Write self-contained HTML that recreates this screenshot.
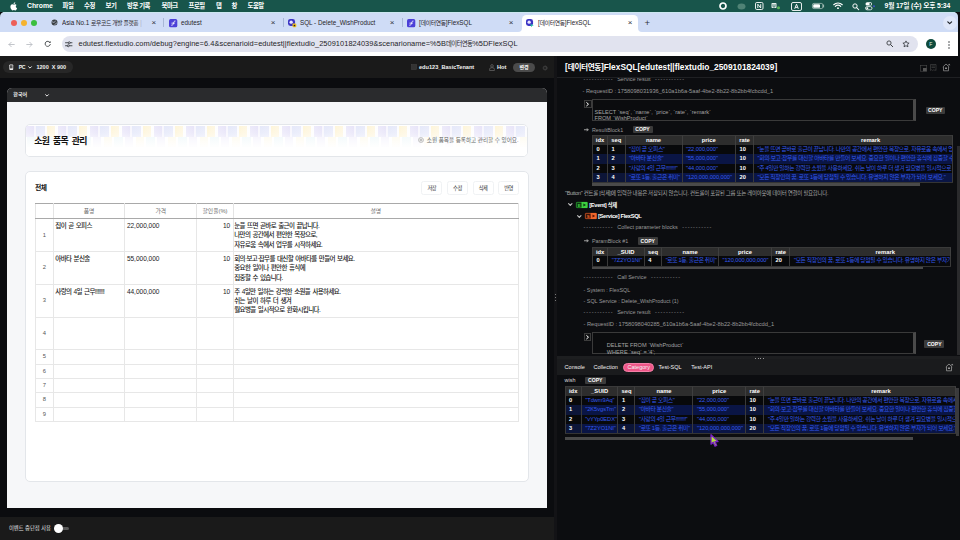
<!DOCTYPE html>
<html lang="ko">
<head>
<meta charset="utf-8">
<title>[데이터연동]FlexSQL</title>
<style>
*{box-sizing:border-box;margin:0;padding:0}
html,body{width:960px;height:540px;overflow:hidden;background:#0c0d10}
body{position:relative;font-family:"Liberation Sans","Noto Sans CJK KR",sans-serif;color:#fff;-webkit-font-smoothing:antialiased}
.a{position:absolute;white-space:nowrap}
svg{position:absolute;overflow:visible}
/* mac menubar */
#menubar{left:0;top:0;width:960px;height:12.4px;background:#18554b}
#menubar .m{top:0;height:12px;line-height:12px;font-size:6.4px;letter-spacing:-.45px;font-weight:700;color:#fff}
/* chrome */
#tabstrip{left:0;top:12.3px;width:958px;height:20px;background:#cfdcf6;border-radius:5px 5px 0 0;box-shadow:inset 0 .8px 0 #cdeaf0}
#toolbar{left:0;top:32px;width:958px;height:24px;background:#fff}
.tabt{top:16px;height:13px;line-height:13px;font-size:6.3px;color:#1f2328}
.tabx{top:15.5px;height:13px;line-height:13px;font-size:8px;color:#30343a}
.sep{top:18px;width:1px;height:9px;background:#a8b8d6}
#omni{left:62px;top:36px;width:856px;height:16px;border-radius:8px;background:#e1e3ef}
#url{left:78.5px;top:36px;height:16px;line-height:16px;font-size:7.42px;letter-spacing:.06px;color:#1f2328}
.k{letter-spacing:-.3px;font-size:5.75px}
/* left */
#ltop{left:0;top:56px;width:554px;height:22px;background:#1a1a1a}
#lbot{left:0;top:517px;width:554px;height:23px;background:#1a1a1a}
#lmid{left:0;top:78px;width:554px;height:439px;background:#0b0c0f}
#frame{left:7px;top:88px;width:540px;height:420px;background:#f6f7f9;border-radius:5px 5px 0 0;overflow:hidden}
#lang{left:0;top:0;width:540px;height:14px;background:#2a2b2d}
.card{background:#fff;border:1px solid #e3e6ea;border-radius:5px}

.lt{font-size:5.7px;font-weight:700;color:#f2f2f2;height:22px;line-height:22px;top:56px}
#frame .t{color:#222}
.btn{top:92.7px;width:21px;height:14.3px;border:1px solid #f0f2f4;border-radius:2.5px;background:#fff;font-size:5.3px;letter-spacing:-.5px;line-height:12.3px;text-align:center;color:#333}
#tbl{left:28px;top:115px;width:484px;border-collapse:collapse;table-layout:fixed;font-size:6.7px;color:#1c1c1c}
#tbl th{height:15.4px;font-weight:400;color:#6c6c6c;font-size:5.8px;border-left:1px solid #e4e4e4;border-right:1px solid #e4e4e4;border-top:1px solid #a9a9a9;border-bottom:1.3px solid #a9a9a9;background:#fff;padding:0;line-height:13px}
#tbl td{font-weight:500;border:1px solid #e7e7e7;vertical-align:top;padding:1.7px 2.4px 0 1.6px;line-height:9.35px;height:32.75px;white-space:nowrap;overflow:hidden}
#tbl tr.s td{height:14.35px}
#tbl td.i{font-weight:400;text-align:center;vertical-align:middle;color:#555;font-size:5.8px;padding:0}
#tbl td.r{text-align:right}
#tbl td:last-child{padding-left:.6px}
#tbl td.ko{letter-spacing:-.62px;word-spacing:1px;font-size:6.5px}
#tbl td.nu{font-size:6.55px;letter-spacing:-.02px}
#pat1{background:repeating-linear-gradient(90deg,#e4e0f8 0,#dcd7f5 8px,#f3f1fc 8px,#f3f1fc 10.5px,#d9def7 10.5px,#dfe2f8 19px,#fbfbfe 19px,#fbfbfe 21.5px,#fdf0c8 21.5px,#fdf3d6 29px,#fdfdfe 29px,#fdfdfe 32px)}
#pat2{background:repeating-linear-gradient(90deg,#fdf6de 0,#fdf6de 8px,#fff 8px,#fff 10.5px,#e3f3f6 10.5px,#e3f3f6 19px,#fff 19px,#fff 21.5px,#ebe8fa 21.5px,#ebe8fa 29px,#fff 29px,#fff 32px);background-position:14px 0}

/* right */
.g{font-size:5.4px;color:#9a9a9a;height:8px;line-height:8px}
.w{font-size:5.8px;letter-spacing:-.36px;color:#fff;font-weight:700;height:8px;line-height:8px}
.copy{background:#3b3b3b;color:#fff;font-size:5.1px;font-weight:700;text-align:center;border-radius:1px}
.exp{width:7.4px;height:8.2px;border:.7px solid #3c3c3c;background:#111214}
.code{border:1px solid #3a3a3a;border-right:3px solid #4a4a4a;background:#0b0c0e}
.dt{border-collapse:separate;border-spacing:0;table-layout:fixed;font-size:5.7px;background:#3a3a3a;border-left:1px solid #3a3a3a;border-bottom:1px solid #343434}
.dt th{background:#2d2d2d;color:#fff;font-weight:700;text-align:center;height:9.8px;line-height:8.8px;padding:0;border-right:1px solid #3f3f3f;border-top:1px solid #3a3a3a;font-size:5.8px}
.dt td{height:9.2px;line-height:9.2px;padding:0 0 0 3.5px;color:#3359ee;background:#08090b;border-right:1px solid #3a3a3a;white-space:nowrap;overflow:hidden;letter-spacing:-.05px}
.dt td.k{letter-spacing:-.35px}
.dt td.n{color:#fff;font-weight:700;letter-spacing:0}
.dt tr.o td{background:#0a1545}
.dt tr.o td.n{background:#0c1538}
.sb{height:2.6px;background:#4a4a4a}
.tb{top:362.6px;height:9.5px;line-height:9.5px;font-size:5.5px;letter-spacing:.02px;color:#f2f2f2}
.ds{letter-spacing:.93px}
.dx{margin:0 4.5px 0 3.7px;font-size:5.5px}
</style>
</head>
<body>
<!-- MENUBAR -->
<div id="menubar" class="a">
  <svg style="left:10px;top:1.5px" width="7" height="8.5" viewBox="0 0 14 17"><path fill="#fff" d="M11.6 9c0-2 1.7-3 1.7-3-1-1.4-2.4-1.6-2.9-1.6-1.2-.1-2.4.7-3 .7s-1.6-.7-2.6-.7C3.5 4.4 2.2 5.2 1.5 6.4 0 8.9 1.1 12.7 2.5 14.7c.7 1 1.5 2.1 2.6 2.1 1 0 1.4-.7 2.7-.7s1.6.7 2.7.7 1.8-1 2.5-2c.8-1.2 1.1-2.3 1.1-2.4 0 0-2.5-.9-2.5-3.4zM9.6 3c.6-.7 1-1.7.9-2.7-.8 0-1.8.5-2.4 1.2-.5.6-1 1.6-.9 2.6.9.1 1.8-.4 2.4-1.1z"/></svg>
  <div class="a m" style="left:27px;font-size:6.9px;letter-spacing:-.05px">Chrome</div>
  <div class="a m" style="left:62.5px">파일</div>
  <div class="a m" style="left:84px">수정</div>
  <div class="a m" style="left:105.5px">보기</div>
  <div class="a m" style="left:127px">방문 기록</div>
  <div class="a m" style="left:161.5px">북마크</div>
  <div class="a m" style="left:188.5px">프로필</div>
  <div class="a m" style="left:216px">탭</div>
  <div class="a m" style="left:231.5px">창</div>
  <div class="a m" style="left:247.5px">도움말</div>

  <svg style="left:718.5px;top:2px" width="8" height="8" viewBox="0 0 8 8"><circle cx="4" cy="4" r="3" fill="none" stroke="#fff" stroke-width="1.7"/></svg>
  <svg style="left:737px;top:2.5px" width="9" height="7" viewBox="0 0 9 7"><ellipse cx="4.5" cy="3.5" rx="4" ry="3" fill="#4f8275"/></svg>
  <svg style="left:755px;top:2px" width="8.5" height="8" viewBox="0 0 8.5 8"><rect x=".5" y=".5" width="7.5" height="7" rx="1.3" fill="none" stroke="#fff" stroke-width=".9"/><path d="M2.8 6V2.2L5.7 6V2.2" fill="none" stroke="#fff" stroke-width=".9"/></svg>
  <svg style="left:771px;top:2px" width="10" height="8" viewBox="0 0 10 8"><rect x=".5" y="1" width="5" height="5" rx=".8" fill="#e8efec"/><path d="M2 2.2v2a1 1 0 0 0 2 0v-2" stroke="#18554b" stroke-width=".8" fill="none"/><circle cx="7.5" cy="5.8" r="1.5" fill="#59b558"/></svg>
  <svg style="left:791px;top:1.5px" width="11" height="9" viewBox="0 0 11 9"><rect x=".5" y=".5" width="10" height="8" rx="1.5" fill="none" stroke="#fff" stroke-width=".9"/><path d="M3.7 6.8L5.5 2.2 7.3 6.8M4.3 5.4h2.4" fill="none" stroke="#fff" stroke-width=".9"/></svg>
  <svg style="left:811.5px;top:3px" width="13" height="6" viewBox="0 0 13 6"><rect x=".4" y=".4" width="10.4" height="5.2" rx="1.5" fill="none" stroke="#a9c2bb" stroke-width=".8"/><rect x="1.2" y="1.2" width="6.8" height="3.6" rx=".9" fill="#fff"/><path d="M11.6 2v2" stroke="#a9c2bb" stroke-width="1" stroke-linecap="round"/></svg>
  <svg style="left:832.5px;top:2.2px" width="10" height="7.5" viewBox="0 0 20 15"><path d="M1.5 5.5a12 12 0 0 1 17 0M4.6 8.6a7.6 7.6 0 0 1 10.8 0" fill="none" stroke="#fff" stroke-width="2.3" stroke-linecap="round"/><circle cx="10" cy="12.3" r="1.9" fill="#fff"/></svg>
  <svg style="left:851.5px;top:2.5px" width="7.5" height="7.5" viewBox="0 0 15 15"><circle cx="6" cy="6" r="4.3" fill="none" stroke="#fff" stroke-width="1.9"/><path d="M9.3 9.3L13.5 13.5" stroke="#fff" stroke-width="2.1" stroke-linecap="round"/></svg>
  <svg style="left:865px;top:2px" width="10" height="8.5" viewBox="0 0 10 8.5"><rect x=".5" y=".3" width="6.5" height="3.2" rx="1.6" fill="#fff"/><circle cx="5.3" cy="1.9" r="1" fill="#18554b"/><rect x=".5" y="4.6" width="6.5" height="3.2" rx="1.6" fill="none" stroke="#fff" stroke-width=".8"/><circle cx="2.3" cy="6.2" r="1" fill="#fff"/><circle cx="9" cy="4.3" r="1" fill="#3f51c9"/></svg>
  <div class="a m" style="left:884.5px;font-size:6.8px;letter-spacing:-.15px">9월 17일 (수) 오후 5:34</div>
</div>
<!-- TABSTRIP -->
<div id="tabstrip" class="a"></div>
<div id="toolbar" class="a"></div>
<div id="omni" class="a"></div>
<div id="url" class="a">edutest.flextudio.com/debug?engine=6.4&amp;scenarioid=edutest||flextudio_2509101824039&amp;scenarioname=%5B<span style="font-size:6.3px;letter-spacing:-.55px">데이터연동</span>%5DFlexSQL</div>

<!-- tabs -->
<svg style="left:10.5px;top:19.5px" width="26" height="6" viewBox="0 0 26 6"><circle cx="3" cy="3" r="3" fill="#ed5f57"/><circle cx="13" cy="3" r="3" fill="#f5b32f"/><circle cx="23" cy="3" r="3" fill="#3bbf3e"/></svg>
<svg style="left:50.5px;top:19px" width="7" height="7" viewBox="0 0 14 14"><circle cx="7" cy="7" r="6" fill="#3c4043"/><path d="M2 5.5c2 0 2.5 1.5 4 1.5s1-2.5 3-3M8 13c-1-2 1-2.5 1.5-4s2.5-.5 3.5-1" stroke="#cfdcf6" stroke-width="1.3" fill="none"/></svg>
<div class="a tabt" style="left:62px;width:81.5px;overflow:hidden">Asia No.1 <span class="k">로우코드 개발 플랫폼</span> | Fle</div>
<div class="a" style="left:132px;top:15px;width:12px;height:14px;background:linear-gradient(90deg,rgba(207,220,246,0),#cfdcf6)"></div>
<div class="a tabx" style="left:151.5px">×</div>
<div class="a sep" style="left:163px"></div>
<svg class="fav" style="left:168.7px;top:18.5px" width="8.3" height="8.3" viewBox="0 0 10 10"><rect width="10" height="10" rx="2" fill="#4b3fd8"/><path d="M3.2 7.5c1.5 0 2-.8 2.3-2.5s.6-2.5 1.8-2.5M3.5 5h3" stroke="#fff" stroke-width="1" fill="none" stroke-linecap="round"/></svg>
<div class="a tabt" style="left:181px">edutest</div>
<div class="a tabx" style="left:270.7px">×</div>
<div class="a sep" style="left:282.5px"></div>
<svg class="fav" style="left:288px;top:18.5px" width="8.3" height="8.3" viewBox="0 0 10 10"><rect width="8.5" height="8.5" rx="3" fill="#3b34c4"/><circle cx="3.8" cy="3.8" r="2" fill="#e9e6ff"/><rect x="5.5" y="5.5" width="4.5" height="4.5" rx="1" fill="#f4c21f"/><rect x="6.8" y="7" width="1.9" height="1.8" fill="#222"/></svg>
<div class="a tabt" style="left:300px">SQL - Delete_WishProduct</div>
<div class="a tabx" style="left:389.7px">×</div>
<div class="a sep" style="left:401.7px"></div>
<svg class="fav" style="left:406.7px;top:18.5px" width="8.3" height="8.3" viewBox="0 0 10 10"><rect width="10" height="10" rx="2" fill="#4b3fd8"/><path d="M3.2 7.5c1.5 0 2-.8 2.3-2.5s.6-2.5 1.8-2.5M3.5 5h3" stroke="#fff" stroke-width="1" fill="none" stroke-linecap="round"/></svg>
<div class="a tabt" style="left:419px">[<span class="k">데이터연동</span>]FlexSQL</div>
<div class="a tabx" style="left:508.7px">×</div>
<!-- active tab -->
<div class="a" style="left:521.5px;top:15px;width:116px;height:17px;background:#fff;border-radius:4.5px 4.5px 0 0"></div>
<svg style="left:517.5px;top:28px" width="4" height="4" viewBox="0 0 4 4"><path d="M4 0v4H0a4 4 0 0 0 4-4z" fill="#fff"/></svg>
<svg style="left:637.5px;top:28px" width="4" height="4" viewBox="0 0 4 4"><path d="M0 0v4h4a4 4 0 0 1-4-4z" fill="#fff"/></svg>
<svg class="fav" style="left:525.8px;top:18.5px" width="8.3" height="8.3" viewBox="0 0 10 10"><rect width="8.5" height="8.5" rx="3" fill="#3b34c4"/><circle cx="3.8" cy="3.8" r="2" fill="#e9e6ff"/><path d="M5 6l4.5 1.5-2 .7-.7 1.8z" fill="#22c9a0"/></svg>
<div class="a tabt" style="left:538px">[<span class="k">데이터연동</span>]FlexSQL</div>
<div class="a tabx" style="left:627.7px">×</div>
<div class="a" style="left:644.5px;top:15.5px;height:13px;line-height:13px;font-size:9.5px;color:#30343a">+</div>
<div class="a" style="left:943px;top:15.5px;width:14px;height:14px;border-radius:7px;background:#dfe7f9"></div>
<svg style="left:947.3px;top:20.8px" width="5.4" height="3.6" viewBox="0 0 5.4 3.6"><path d="M.8.8l1.9 1.9L4.6.8" fill="none" stroke="#1f2328" stroke-width="1.2" stroke-linecap="round" stroke-linejoin="round"/></svg>
<!-- toolbar icons -->
<svg style="left:7.5px;top:40.5px" width="7" height="7" viewBox="0 0 14 14"><path d="M12.5 7H2M6.5 2.5L2 7l4.5 4.5" fill="none" stroke="#b8bcc2" stroke-width="1.7" stroke-linecap="round" stroke-linejoin="round"/></svg>
<svg style="left:25.5px;top:40.5px" width="7" height="7" viewBox="0 0 14 14"><path d="M1.5 7H12M7.5 2.5L12 7l-4.5 4.5" fill="none" stroke="#b8bcc2" stroke-width="1.7" stroke-linecap="round" stroke-linejoin="round"/></svg>
<svg style="left:43.5px;top:40.3px" width="7.4" height="7.4" viewBox="0 0 15 15"><path d="M12.3 5.2A5.3 5.3 0 1 0 12.8 9" fill="none" stroke="#3c4043" stroke-width="1.8" stroke-linecap="round"/><path d="M13.3 1.8v4h-4z" fill="#3c4043"/></svg>
<svg style="left:65px;top:41px" width="7.5" height="6.5" viewBox="0 0 15 13"><path d="M1 3.5h5M11 3.5h3M1 9.5h3M9 9.5h5" stroke="#30343a" stroke-width="1.7" stroke-linecap="round"/><circle cx="8.5" cy="3.5" r="2" fill="none" stroke="#30343a" stroke-width="1.6"/><circle cx="6.5" cy="9.5" r="2" fill="none" stroke="#30343a" stroke-width="1.6"/></svg>
<svg style="left:886px;top:40.3px" width="7.5" height="7.5" viewBox="0 0 15 15"><circle cx="6" cy="6" r="4.2" fill="none" stroke="#3c4043" stroke-width="1.8"/><path d="M9.3 9.3L13.5 13.5" stroke="#3c4043" stroke-width="2" stroke-linecap="round"/></svg>
<svg style="left:902px;top:40px" width="8" height="8" viewBox="0 0 16 16"><path d="M8 1.8l1.9 4 4.3.5-3.2 3 .9 4.3L8 11.4l-3.9 2.2.9-4.3-3.2-3 4.3-.5z" fill="none" stroke="#30343a" stroke-width="1.6" stroke-linejoin="round"/></svg>
<div class="a" style="left:925.8px;top:39px;width:10px;height:10px;border-radius:5px;background:#0e4b3d;color:#e9f5f0;font-size:5px;line-height:10px;text-align:center">F</div>
<svg style="left:948px;top:40.5px" width="2" height="8" viewBox="0 0 2 8"><circle cx="1" cy="1" r=".8" fill="#3c4043"/><circle cx="1" cy="4" r=".8" fill="#3c4043"/><circle cx="1" cy="7" r=".8" fill="#3c4043"/></svg>
<!-- LEFT -->
<div id="lmid" class="a"></div>
<div id="ltop" class="a"></div>
<div id="lbot" class="a"></div>
<div class="a" style="left:3px;top:61px;width:70px;height:12px;border-radius:6px;background:#272727"></div>
<svg style="left:9px;top:64px" width="4.6" height="6.4" viewBox="0 0 4.6 6.4"><rect x=".4" y=".4" width="3.8" height="5.6" rx=".8" fill="#f0f0f0"/><rect x="1" y="1.2" width="2.6" height="3.2" fill="#555"/></svg>
<div class="a lt" style="left:18.8px;font-size:5.2px;letter-spacing:-.4px">PC</div>
<svg style="left:28px;top:65.7px" width="4" height="3" viewBox="0 0 4 3"><path d="M.6.7L2 2.1 3.4.7" fill="none" stroke="#fff" stroke-width=".9" stroke-linecap="round" stroke-linejoin="round"/></svg>
<div class="a lt" style="left:36.5px;font-size:5.5px">1200&nbsp; X 900</div>
<svg style="left:410.5px;top:64.2px" width="6" height="6" viewBox="0 0 6 6"><rect x=".3" y=".3" width="5.4" height="5.4" fill="#2c2c2c" stroke="#444" stroke-width=".5"/><path d="M2 .3v5.4M4 .3v5.4M.3 2h5.4M.3 4h5.4" stroke="#444" stroke-width=".4"/></svg>
<div class="a lt" style="left:419px;font-size:5.6px">edu123_BasicTenant</div>
<svg style="left:489px;top:63.5px" width="6" height="7" viewBox="0 0 12 14"><circle cx="6" cy="3.8" r="2.6" fill="none" stroke="#777" stroke-width="1.2"/><path d="M1.2 13v-2.5a3 3 0 0 1 3-3h3.6a3 3 0 0 1 3 3V13z" fill="none" stroke="#777" stroke-width="1.2"/></svg>
<div class="a lt" style="left:497px;font-size:5.7px">Hot</div>
<div class="a" style="left:513px;top:63px;width:22px;height:9px;border-radius:4.5px;background:#4b4b4b;font-size:5px;font-weight:700;line-height:9px;text-align:center;color:#fff">변경</div>
<svg style="left:541.7px;top:64.5px" width="6" height="6" viewBox="0 0 12 12"><path d="M6 .8l1.5.4.5 1.4 1.4-.4 1.1 1.1-.4 1.4 1.4.5V6.8l-1.4.5.4 1.4-1.1 1.1-1.4-.4-.5 1.4H5.2l-.5-1.4-1.4.4-1.1-1.1.4-1.4L1.2 6.8V5.2l1.4-.5-.4-1.4 1.1-1.1 1.4.4.5-1.4z" fill="#3a3a3a"/><circle cx="6" cy="6" r="1.8" fill="#1a1a1a"/></svg>
<div class="a" style="left:9px;top:517px;height:23px;line-height:23px;font-size:5.3px;color:#e0e0e0">이벤트 중단점 사용</div>
<div class="a" style="left:57px;top:526.7px;width:11.5px;height:3.6px;border-radius:2px;background:#5a5a5a"></div>
<div class="a" style="left:53.5px;top:524px;width:9px;height:9px;border-radius:4.5px;background:#fff"></div>
<div id="frame" class="a">
  <div id="lang" class="a"></div>
  <div class="a" style="left:6.3px;top:0;height:14px;line-height:13.6px;font-size:5px;font-weight:700;color:#f0f0f0">한국어</div>
  <svg style="left:38.4px;top:5.6px" width="4" height="3" viewBox="0 0 4 3"><path d="M.6.7L2 2.1 3.4.7" fill="none" stroke="#fff" stroke-width=".9" stroke-linecap="round" stroke-linejoin="round"/></svg>
  <!-- title card -->
  <div class="a card" id="c1" style="left:18px;top:36px;width:503px;height:32.5px;overflow:hidden">
    <div class="a" id="pat1" style="left:0;top:1px;width:503px;height:10.5px"></div>
    <div class="a" id="pat2" style="left:0;top:12px;width:503px;height:10px"></div>
    <div class="a" style="left:0;top:0;width:503px;height:32px;background:linear-gradient(180deg,rgba(255,255,255,.3) 0,rgba(255,255,255,.45) 25%,rgba(255,255,255,.7) 45%,rgba(255,255,255,.92) 65%,rgba(255,255,255,1) 85%)"></div>
  </div>
  <div class="a t" style="left:27.2px;top:45.5px;height:14px;line-height:14px;font-size:8.9px;letter-spacing:-.55px;word-spacing:1.6px;font-weight:700;color:#111">소원 품목 관리</div>
  <div class="a t" style="right:28.5px;top:46.5px;height:11px;line-height:11px;font-size:5.6px;color:#666"><svg style="position:relative;display:inline-block;vertical-align:-1.2px;margin-right:1px" width="6" height="6" viewBox="0 0 6 6"><circle cx="3" cy="3" r="2.5" fill="#e8e8e8" stroke="#b5b5b5" stroke-width=".7"/><circle cx="3" cy="3" r="1" fill="#b5b5b5"/></svg> 소원 품목을 등록하고 관리할 수 있어요.</div>
  <!-- list card -->
  <div class="a card" style="left:18px;top:82.5px;width:503.6px;height:311.8px"></div>
  <div class="a t" style="left:28px;top:93px;height:14px;line-height:14px;font-size:6.8px;letter-spacing:-.6px;font-weight:700;color:#111">전체</div>
  <div class="a btn" style="left:414.3px">저장</div>
  <div class="a btn" style="left:439.9px">수정</div>
  <div class="a btn" style="left:465.5px">삭제</div>
  <div class="a btn" style="left:491px">반영</div>
  <table id="tbl" class="a">
    <colgroup><col style="width:17.7px"><col style="width:71.6px"><col style="width:72.2px"><col style="width:36.1px"><col></colgroup>
    <tr><th></th><th>품명</th><th>가격</th><th>할인율(%)</th><th>설명</th></tr>
    <tr><td class="i">1</td><td class="ko">집이 곧 오피스</td><td class="nu">22,000,000</td><td class="r nu">10</td><td class="ko">눈을 뜨면 곧바로 출근이 끝납니다.<br>나만의 공간에서 편안한 복장으로,<br>자유로움 속에서 업무를 시작하세요.</td></tr>
    <tr><td class="i">2</td><td class="ko">아바타 분신술</td><td class="nu">55,000,000</td><td class="r nu">10</td><td class="ko">회의·보고·잡무를 대신할 아바타를 만들어 보세요.<br>중요한 일이나 편안한 휴식에<br>집중할 수 있습니다.</td></tr>
    <tr><td class="i">3</td><td class="ko">사랑의 4일 근무!!!!!!!!</td><td class="nu">44,000,000</td><td class="r nu">10</td><td class="ko">주 4일만 일하는 강력한 소원을 사용하세요.<br>쉬는 날이 하루 더 생겨<br>월요병을 일시적으로 완화시킵니다.</td></tr>
    <tr><td class="i">4</td><td></td><td></td><td></td><td></td></tr>
    <tr class="s"><td class="i">5</td><td></td><td></td><td></td><td></td></tr>
    <tr class="s"><td class="i">6</td><td></td><td></td><td></td><td></td></tr>
    <tr class="s"><td class="i">7</td><td></td><td></td><td></td><td></td></tr>
    <tr class="s"><td class="i">8</td><td></td><td></td><td></td><td></td></tr>
    <tr class="s"><td class="i">9</td><td></td><td></td><td></td><td></td></tr>
  </table>
</div>
<!-- RIGHT -->
<div id="right" class="a" style="left:557px;top:56px;width:403px;height:484px;background:#0c0d10"></div>
<div class="a" style="left:553.5px;top:56px;width:3.5px;height:484px;background:#131316"></div>
<div class="a" style="left:554.6px;top:294px;width:1px;height:9px;background:repeating-linear-gradient(180deg,#777 0,#777 1px,transparent 1px,transparent 3px)"></div>
<div class="a g" style="left:583.5px;top:74.5px"><span class="ds">-----------</span><span class="dx">Service result</span><span class="ds">-----------</span></div>
<div class="a" style="left:557px;top:56px;width:403px;height:21.5px;background:#0c0d10;border-bottom:1px solid #1f2023"></div>
<div class="a" id="rtitle" style="left:565px;top:58px;height:18px;line-height:18px;font-size:8.35px;font-weight:700;color:#fff">[<span style="letter-spacing:-.45px;font-size:7.7px">데이터연동</span>]FlexSQL[edutest||flextudio_2509101824039]</div>
<svg style="left:920px;top:64.5px" width="7" height="6.5" viewBox="0 0 7 6.5"><rect x=".3" y=".3" width="6.4" height="5.9" fill="none" stroke="#4a4a4a" stroke-width=".6"/><rect x="3" y="3" width="3.7" height="3.2" fill="#555"/></svg>
<svg style="left:930.3px;top:64px" width="6.5" height="7" viewBox="0 0 6.5 7"><path d="M.5.5h5.5v6l-1-.8-.9.8-.9-.8-.9.8-.9-.8-.9.8z" fill="none" stroke="#4a4a4a" stroke-width=".6"/><path d="M1.5 2h3.5M1.5 3.5h3.5" stroke="#4a4a4a" stroke-width=".6"/></svg>
<svg style="left:941.5px;top:63px" width="9" height="8.5" viewBox="0 0 9 8.5"><path d="M.8 4L4 1l3.2 3M1.5 3.8V7.8h5V3.8" fill="none" stroke="#8a8a8a" stroke-width=".8"/><path d="M5.5 2.2l2-1.5.8 1.5z" fill="#8a8a8a"/><rect x="3" y="4.5" width="2" height="1.5" fill="#8a8a8a"/></svg>

<div class="a g" style="left:582.5px;top:87.3px;font-size:5.7px">- RequestID : 1758098031936_610a1b6a-5aaf-4be2-8b22-8b2bb4fcbcdd_1</div>
<div class="a code" style="left:591.5px;top:99.2px;width:324.5px;height:22.1px"></div>
<div class="a exp" style="left:584.2px;top:100px"></div>
<svg style="left:586.3px;top:102px" width="3.2" height="4.4" viewBox="0 0 3.2 4.4"><path d="M.7.6l1.8 1.6L.7 3.8" fill="none" stroke="#fff" stroke-width="1" stroke-linecap="round" stroke-linejoin="round"/></svg>
<div class="a g" style="left:594.5px;top:107.7px;color:#a5a5a5;font-size:5.6px">SELECT `seq`, `name`, `price`, `rate`, `remark`</div>
<div class="a g" style="left:594.5px;top:114px;color:#a5a5a5;font-size:5.6px">FROM `WishProduct`</div>
<div class="a copy" style="left:925.5px;top:106.5px;width:19.5px;height:7.5px;line-height:7.5px">COPY</div>
<div class="a g" style="left:584px;top:125.7px;color:#999;padding-left:8px;font-size:5.35px"><svg style="left:0;top:2.4px" width="5" height="3.4" viewBox="0 0 5 3.4"><path d="M0 1.2h2.700V0L5 1.700 2.700 3.4V2.2H0z" fill="#999"/></svg>ResultBlock1</div>
<div class="a copy" style="left:632.5px;top:126.3px;width:20px;height:7px;line-height:7px">COPY</div>
<table class="a dt" style="left:592px;top:135.4px;width:360.6px"><colgroup><col style="width:15px"><col style="width:17.5px"><col style="width:57px"><col style="width:53.5px"><col style="width:18px"><col></colgroup><tr><th>idx</th><th>seq</th><th>name</th><th>price</th><th>rate</th><th style="padding-left:35.6px">remark</th></tr><tr><td class="n">0</td><td class="n">1</td><td class="k">&quot;집이 곧 오피스&quot;</td><td>&quot;22,000,000&quot;</td><td class="n">10</td><td class="k">&quot;눈을 뜨면 곧바로 출근이 끝납니다. 나만의 공간에서 편안한 복장으로, 자유로움 속에서 업무를 시작하세요.&quot;</td></tr><tr class="o"><td class="n">1</td><td class="n">2</td><td class="k">&quot;아바타 분신술&quot;</td><td>&quot;55,000,000&quot;</td><td class="n">10</td><td class="k">&quot;회의·보고·잡무를 대신할 아바타를 만들어 보세요. 중요한 일이나 편안한 휴식에 집중할 수 있습니다.&quot;</td></tr><tr><td class="n">2</td><td class="n">3</td><td class="k">&quot;사랑의 4일 근무!!!!!!!!&quot;</td><td>&quot;44,000,000&quot;</td><td class="n">10</td><td class="k">&quot;주 4일만 일하는 강력한 소원을 사용하세요. 쉬는 날이 하루 더 생겨 월요병을 일시적으로 완화시킵니다.&quot;</td></tr><tr class="o"><td class="n">3</td><td class="n">4</td><td class="k">&quot;로또 1등, 출근은 취미&quot;</td><td>&quot;120,000,000,000&quot;</td><td class="n">20</td><td class="k">&quot;모든 직장인의 꿈, 로또 1등에 당첨될 수 있습니다. 유명하지 않은 부자가 되어 보세요.&quot;</td></tr></table>
<div class="a sb" style="left:592px;top:183.3px;width:327.5px"></div>
<div class="a g" style="left:565px;top:189.4px;color:#a8a8a8;letter-spacing:-.3px;font-size:5.5px">"Button" 컨트롤 [삭제]에 입력한 내용은 저장되지 않습니다. 컨트롤이 포함된 그룹 또는 레이아웃에 데이터 연결이 필요합니다.</div>

<svg style="left:568px;top:203px" width="4.6" height="3.4" viewBox="0 0 4.6 3.4"><path d="M.6.7l1.7 1.8L4 .7" fill="none" stroke="#c4c4c4" stroke-width="1.1" stroke-linecap="round" stroke-linejoin="round"/></svg>
<svg style="left:576px;top:201.7px" width="11.5" height="6" viewBox="0 0 11.5 6"><rect x=".35" y=".35" width="10.8" height="5.3" rx=".5" fill="#0d3510" stroke="#2fb035" stroke-width=".7"/><rect x="5.5" y="0" width="6" height="6" rx=".5" fill="#3ccf3f"/><path d="M7.4 1.5l2.6 1.5-2.6 1.5z" fill="#0d3510"/><text x="1.7" y="4.7" font-family="Liberation Sans, sans-serif" font-size="4.3" font-weight="700" fill="#3ccf3f">E</text></svg>
<div class="a w" style="left:589.3px;top:200.8px">[Event] <span style="letter-spacing:-.5px;font-size:5.4px">삭제</span></div>
<svg style="left:577px;top:214.8px" width="4.6" height="3.4" viewBox="0 0 4.6 3.4"><path d="M.6.7l1.7 1.8L4 .7" fill="none" stroke="#c4c4c4" stroke-width="1.1" stroke-linecap="round" stroke-linejoin="round"/></svg>
<svg style="left:584.7px;top:213.2px" width="11.6" height="6" viewBox="0 0 11.6 6"><rect x=".35" y=".35" width="10.9" height="5.3" rx=".5" fill="#3a1306" stroke="#e85f28" stroke-width=".7"/><rect x="5.6" y="0" width="6" height="6" rx=".5" fill="#f0672c"/><path d="M7.5 1.5l2.6 1.5-2.6 1.5z" fill="#5a1205"/><text x="1.7" y="4.7" font-family="Liberation Sans, sans-serif" font-size="4.3" font-weight="700" fill="#f0672c">S</text></svg>
<div class="a w" style="left:598px;top:212.4px">[Service] FlexSQL</div>
<div class="a g" style="left:583.5px;top:223.4px"><span class="ds">-----------</span><span class="dx">Collect parameter blocks</span><span class="ds">-----------</span></div>
<div class="a g" style="left:584px;top:236.7px;color:#999;padding-left:8px;font-size:5.35px"><svg style="left:0;top:2.4px" width="5" height="3.4" viewBox="0 0 5 3.4"><path d="M0 1.2h2.700V0L5 1.700 2.700 3.4V2.2H0z" fill="#999"/></svg>ParamBlock #1</div>
<div class="a copy" style="left:637.6px;top:236.8px;width:20.4px;height:8.2px;line-height:8.2px">COPY</div>
<table class="a dt" style="left:592px;top:246.5px;width:359px"><colgroup><col style="width:15.2px"><col style="width:36.6px"><col style="width:17.4px"><col style="width:56.8px"><col style="width:53px"><col style="width:18.5px"><col></colgroup><tr><th>idx</th><th>_SUID</th><th>seq</th><th>name</th><th>price</th><th>rate</th><th style="padding-left:30px">remark</th></tr><tr><td class="n">0</td><td>&quot;7Z2YO1NI&quot;</td><td class="n">4</td><td class="k">&quot;로또 1등, 출근은 취미&quot;</td><td>&quot;120,000,000,000&quot;</td><td class="n">20</td><td class="k">&quot;모든 직장인의 꿈, 로또 1등에 당첨될 수 있습니다. 유명하지 않은 부자가 되어 보세요.&quot;</td></tr></table>
<div class="a sb" style="left:592px;top:266.7px;width:331.4px;height:2.3px"></div>
<div class="a g" style="left:583.5px;top:273px"><span class="ds">-----------</span><span class="dx">Call Service</span><span class="ds">-----------</span></div>
<div class="a g" style="left:583.5px;top:286px">- System : FlexSQL</div>
<div class="a g" style="left:583.5px;top:296.6px">- SQL Service : Delete_WishProduct (1)</div>
<div class="a g" style="left:583.5px;top:307.6px"><span class="ds">-----------</span><span class="dx">Service result</span><span class="ds">-----------</span></div>
<div class="a g" style="left:583.5px;top:320.2px;font-size:5.7px">- RequestID : 1758098040285_610a1b6a-5aaf-4be2-8b22-8b2bb4fcbcdd_1</div>
<div class="a code" style="left:591.5px;top:332.3px;width:324.5px;height:22.1px"></div>
<div class="a exp" style="left:584px;top:333.3px"></div>
<svg style="left:586.1px;top:335.3px" width="3.2" height="4.4" viewBox="0 0 3.2 4.4"><path d="M.7.6l1.8 1.6L.7 3.8" fill="none" stroke="#fff" stroke-width="1" stroke-linecap="round" stroke-linejoin="round"/></svg>
<div class="a g" style="left:606.8px;top:340.6px;color:#a5a5a5;font-size:5.6px">DELETE FROM `WishProduct`</div>
<div class="a g" style="left:606.8px;top:347.8px;color:#a5a5a5;font-size:5.6px">WHERE `seq` = '4';</div>
<div class="a copy" style="left:924.4px;top:339.8px;width:20px;height:8.1px;line-height:8.1px">COPY</div>
<!-- bottom panel -->
<div class="a" style="left:557px;top:355.5px;width:403px;height:3px;background:#1d1e20"></div>
<div class="a" style="left:755px;top:357.8px;width:9px;height:1px;background:repeating-linear-gradient(90deg,#999 0,#999 1px,transparent 1px,transparent 2.5px)"></div>
<div class="a" style="left:557px;top:358.5px;width:403px;height:16.3px;background:#1a1b1d"></div>
<div class="a" style="left:557px;top:374.8px;width:403px;height:165.2px;background:#0c0d10"></div>
<div class="a tb" style="left:564.6px">Console</div>
<div class="a tb" style="left:593.5px">Collection</div>
<div class="a" style="left:623px;top:362.8px;width:31.4px;height:9.2px;border-radius:4.6px;background:#ee5688;border:.6px solid #f47fa6"></div>
<div class="a tb" style="left:627.5px">Category</div>
<div class="a tb" style="left:658.6px">Test-SQL</div>
<div class="a tb" style="left:691.3px">Test-API</div>
<svg style="left:945px;top:362.5px" width="9" height="8.5" viewBox="0 0 9 8.5"><path d="M.8 4L4 1l3.2 3M1.5 3.8V7.8h5V3.8" fill="none" stroke="#999" stroke-width=".8"/><path d="M5.5 2.2l2-1.5.8 1.5z" fill="#999"/><rect x="3" y="4.5" width="2" height="1.5" fill="#999"/></svg>
<div class="a g" style="left:564.6px;top:376px;color:#ddd">wish</div>
<div class="a copy" style="left:585px;top:376.7px;width:20.6px;height:7.1px;line-height:7.1px">COPY</div>
<table class="a dt" style="left:564.6px;top:386.3px;width:391px"><colgroup><col style="width:16.2px"><col style="width:36.7px"><col style="width:17px"><col style="width:58px"><col style="width:52.5px"><col style="width:18.5px"><col></colgroup><tr><th>idx</th><th>_SUID</th><th>seq</th><th>name</th><th>price</th><th>rate</th><th style="padding-left:43px">remark</th></tr><tr><td class="n">0</td><td>&quot;Tdwm9Aq&quot;</td><td class="n">1</td><td class="k">&quot;집이 곧 오피스&quot;</td><td>&quot;22,000,000&quot;</td><td class="n">10</td><td class="k">&quot;눈을 뜨면 곧바로 출근이 끝납니다. 나만의 공간에서 편안한 복장으로, 자유로움 속에서 업무를 시작하세요.&quot;</td></tr><tr class="o"><td class="n">1</td><td>&quot;2K5vgsTm&quot;</td><td class="n">2</td><td class="k">&quot;아바타 분신술&quot;</td><td>&quot;55,000,000&quot;</td><td class="n">10</td><td class="k">&quot;회의·보고·잡무를 대신할 아바타를 만들어 보세요. 중요한 일이나 편안한 휴식에 집중할 수 있습니다.&quot;</td></tr><tr><td class="n">2</td><td>&quot;vYYp0EDX&quot;</td><td class="n">3</td><td class="k">&quot;사랑의 4일 근무!!!!!!!!&quot;</td><td>&quot;44,000,000&quot;</td><td class="n">10</td><td class="k">&quot;주 4일만 일하는 강력한 소원을 사용하세요. 쉬는 날이 하루 더 생겨 월요병을 일시적으로 완화시킵니다.&quot;</td></tr><tr class="o"><td class="n">3</td><td>&quot;7Z2YO1NI&quot;</td><td class="n">4</td><td class="k">&quot;로또 1등, 출근은 취미&quot;</td><td>&quot;120,000,000,000&quot;</td><td class="n">20</td><td class="k">&quot;모든 직장인의 꿈, 로또 1등에 당첨될 수 있습니다. 유명하지 않은 부자가 되어 보세요.&quot;</td></tr></table>
<div class="a sb" style="left:564.6px;top:436.8px;width:348.4px;height:3px"></div>
<div class="a" style="left:956.6px;top:146px;width:3.4px;height:209px;background:#2a2a2c"></div>
<div class="a" style="left:956px;top:388px;width:3px;height:48px;background:#3a3a3c"></div>
<!-- cursor -->
<svg style="left:709.8px;top:433.5px" width="8.5" height="13" viewBox="0 0 8.5 13"><path d="M1 .8v9.4l2.3-2 1.700 4 1.700-.7-1.700-3.900h3.100z" fill="#b4e23c" stroke="#7a22c4" stroke-width="1.3" stroke-linejoin="round"/></svg>
</body>
</html>
